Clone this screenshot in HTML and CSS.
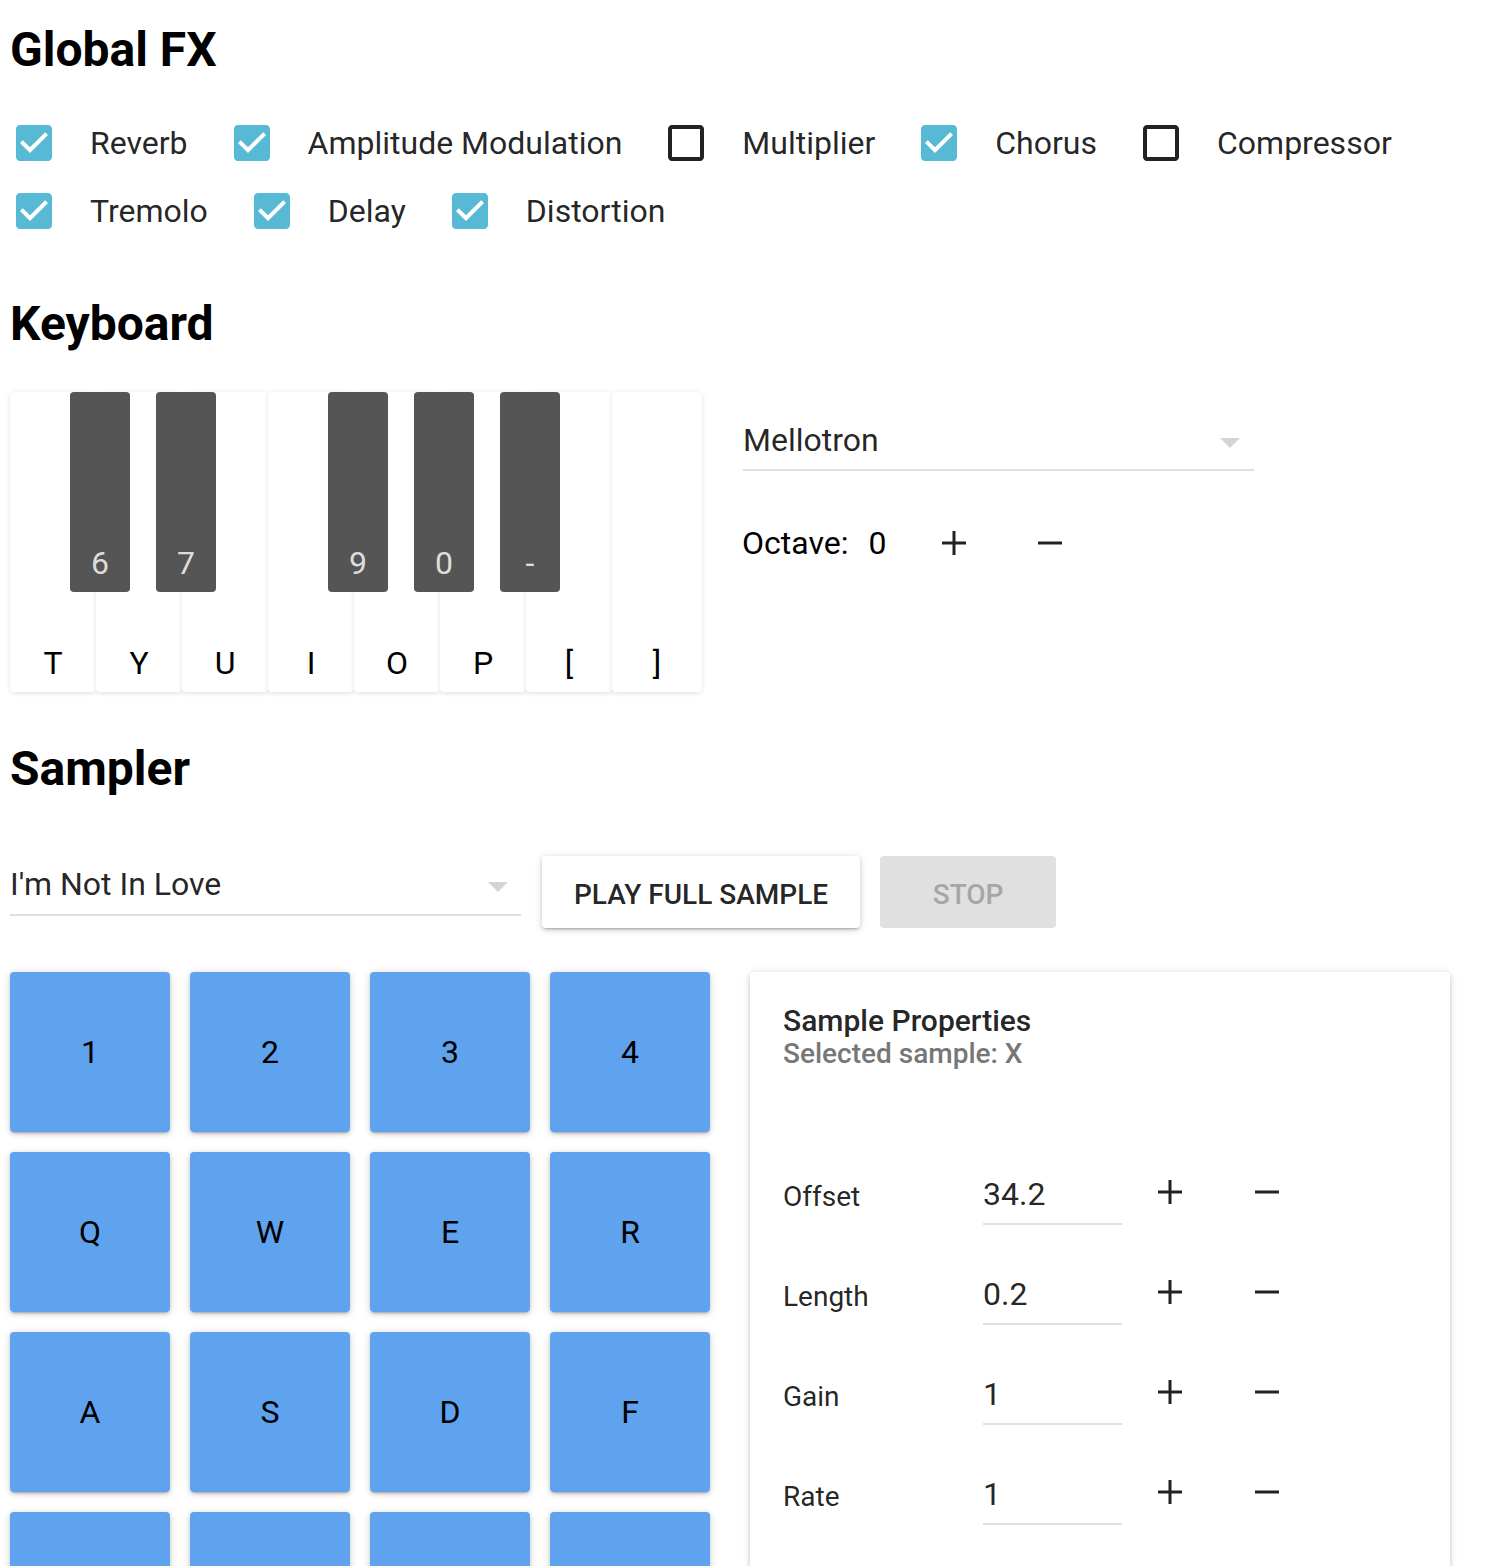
FILE: index.html
```html
<!DOCTYPE html>
<html lang="en">
<head>
    <meta charset="UTF-8">
    <meta name="viewport" content="width=device-width, initial-scale=1.0">
    <title>Synth</title>
    <link rel="stylesheet" href="styles.css">
</head>
<body>
    <div class="app">
        <h2 class="section-title fx-title">Global FX</h2>

        <div class="fx-list">
            <div class="fx-row">
                <label class="fx-item">
                    <svg class="check on" viewBox="0 0 24 24"><path d="M19 3H5c-1.11 0-2 .9-2 2v14c0 1.1.89 2 2 2h14c1.11 0 2-.9 2-2V5c0-1.1-.89-2-2-2zm-9 14l-5-5 1.41-1.41L10 14.17l7.59-7.59L19 8l-7 7z"/></svg>
                    <span>Reverb</span>
                </label>
                <label class="fx-item">
                    <svg class="check on" viewBox="0 0 24 24"><path d="M19 3H5c-1.11 0-2 .9-2 2v14c0 1.1.89 2 2 2h14c1.11 0 2-.9 2-2V5c0-1.1-.89-2-2-2zm-9 14l-5-5 1.41-1.41L10 14.17l7.59-7.59L19 8l-7 7z"/></svg>
                    <span>Amplitude Modulation</span>
                </label>
                <label class="fx-item">
                    <svg class="check" viewBox="0 0 24 24"><path d="M19 5v14H5V5h14m0-2H5c-1.1 0-2 .9-2 2v14c0 1.1.9 2 2 2h14c1.1 0 2-.9 2-2V5c0-1.1-.9-2-2-2z"/></svg>
                    <span>Multiplier</span>
                </label>
                <label class="fx-item">
                    <svg class="check on" viewBox="0 0 24 24"><path d="M19 3H5c-1.11 0-2 .9-2 2v14c0 1.1.89 2 2 2h14c1.11 0 2-.9 2-2V5c0-1.1-.89-2-2-2zm-9 14l-5-5 1.41-1.41L10 14.17l7.59-7.59L19 8l-7 7z"/></svg>
                    <span>Chorus</span>
                </label>
                <label class="fx-item">
                    <svg class="check" viewBox="0 0 24 24"><path d="M19 5v14H5V5h14m0-2H5c-1.1 0-2 .9-2 2v14c0 1.1.9 2 2 2h14c1.1 0 2-.9 2-2V5c0-1.1-.9-2-2-2z"/></svg>
                    <span>Compressor</span>
                </label>
            </div>
            <div class="fx-row">
                <label class="fx-item">
                    <svg class="check on" viewBox="0 0 24 24"><path d="M19 3H5c-1.11 0-2 .9-2 2v14c0 1.1.89 2 2 2h14c1.11 0 2-.9 2-2V5c0-1.1-.89-2-2-2zm-9 14l-5-5 1.41-1.41L10 14.17l7.59-7.59L19 8l-7 7z"/></svg>
                    <span>Tremolo</span>
                </label>
                <label class="fx-item">
                    <svg class="check on" viewBox="0 0 24 24"><path d="M19 3H5c-1.11 0-2 .9-2 2v14c0 1.1.89 2 2 2h14c1.11 0 2-.9 2-2V5c0-1.1-.89-2-2-2zm-9 14l-5-5 1.41-1.41L10 14.17l7.59-7.59L19 8l-7 7z"/></svg>
                    <span>Delay</span>
                </label>
                <label class="fx-item">
                    <svg class="check on" viewBox="0 0 24 24"><path d="M19 3H5c-1.11 0-2 .9-2 2v14c0 1.1.89 2 2 2h14c1.11 0 2-.9 2-2V5c0-1.1-.89-2-2-2zm-9 14l-5-5 1.41-1.41L10 14.17l7.59-7.59L19 8l-7 7z"/></svg>
                    <span>Distortion</span>
                </label>
            </div>
        </div>

        <h2 class="section-title keyboard-title">Keyboard</h2>

        <div class="keyboard-row">
            <div class="piano">
                <div class="white-key">T<div class="black-key">6</div></div>
                <div class="white-key">Y<div class="black-key">7</div></div>
                <div class="white-key">U</div>
                <div class="white-key">I<div class="black-key">9</div></div>
                <div class="white-key">O<div class="black-key">0</div></div>
                <div class="white-key">P<div class="black-key">-</div></div>
                <div class="white-key">[</div>
                <div class="white-key">]</div>
            </div>

            <div class="instrument">
                <div class="select instrument-select">
                    <span>Mellotron</span>
                    <span class="arrow"></span>
                </div>
                <div class="octave">
                    <span class="octave-label">Octave:</span>
                    <span class="octave-value">0</span>
                    <svg class="icon plus" viewBox="0 0 24 24"><path d="M12 0v24M0 12h24"/></svg>
                    <svg class="icon minus" viewBox="0 0 24 24"><path d="M0 12h24"/></svg>
                </div>
            </div>
        </div>

        <h2 class="section-title sampler-title">Sampler</h2>

        <div class="sampler-controls">
            <div class="select sample-select">
                <span>I'm Not In Love</span>
                <span class="arrow"></span>
            </div>
            <button class="btn">Play full sample</button>
            <button class="btn disabled">Stop</button>
        </div>

        <div class="sampler-main">
            <div class="pads">
                <div class="pad">1</div>
                <div class="pad">2</div>
                <div class="pad">3</div>
                <div class="pad">4</div>
                <div class="pad">Q</div>
                <div class="pad">W</div>
                <div class="pad">E</div>
                <div class="pad">R</div>
                <div class="pad">A</div>
                <div class="pad">S</div>
                <div class="pad">D</div>
                <div class="pad">F</div>
                <div class="pad"></div>
                <div class="pad"></div>
                <div class="pad"></div>
                <div class="pad"></div>
            </div>

            <div class="card">
                <div class="card-title">Sample Properties</div>
                <div class="card-subtitle">Selected sample: X</div>

                <div class="props">
                    <div class="prop">
                        <span class="prop-label">Offset</span>
                        <span class="prop-value">34.2</span>
                        <svg class="icon plus" viewBox="0 0 24 24"><path d="M12 0v24M0 12h24"/></svg>
                        <svg class="icon minus" viewBox="0 0 24 24"><path d="M0 12h24"/></svg>
                    </div>
                    <div class="prop">
                        <span class="prop-label">Length</span>
                        <span class="prop-value">0.2</span>
                        <svg class="icon plus" viewBox="0 0 24 24"><path d="M12 0v24M0 12h24"/></svg>
                        <svg class="icon minus" viewBox="0 0 24 24"><path d="M0 12h24"/></svg>
                    </div>
                    <div class="prop">
                        <span class="prop-label">Gain</span>
                        <span class="prop-value">1</span>
                        <svg class="icon plus" viewBox="0 0 24 24"><path d="M12 0v24M0 12h24"/></svg>
                        <svg class="icon minus" viewBox="0 0 24 24"><path d="M0 12h24"/></svg>
                    </div>
                    <div class="prop">
                        <span class="prop-label">Rate</span>
                        <span class="prop-value">1</span>
                        <svg class="icon plus" viewBox="0 0 24 24"><path d="M12 0v24M0 12h24"/></svg>
                        <svg class="icon minus" viewBox="0 0 24 24"><path d="M0 12h24"/></svg>
                    </div>
                </div>
            </div>
        </div>
    </div>
</body>
</html>
```

FILE: styles.css
```css
body {
    font-family: Roboto, 'Noto Sans', sans-serif;
    margin: 0;
    background: #fff;
    color: rgba(0, 0, 0, 0.87);
}
.app {
    padding: 0 10px;
}
.section-title {
    font-size: 48px;
    font-weight: 700;
    line-height: 56px;
    color: #000;
    margin: 0;
}
.fx-title {
    margin-top: 22px;
}
.keyboard-title {
    margin-top: 51px;
}
.sampler-title {
    margin-top: 49px;
}

/* global fx checkboxes */
.fx-list {
    margin-top: 31px;
}
.fx-row {
    display: flex;
    height: 68px;
    align-items: center;
}
.fx-item {
    display: flex;
    align-items: center;
    font-size: 32px;
    line-height: 40px;
    margin-right: 40px;
}
.check {
    width: 48px;
    height: 48px;
    margin-right: 32px;
    fill: #222;
}
.check.on {
    fill: #58b9d4;
}

/* keyboard */
.keyboard-row {
    display: flex;
    margin-top: 40px;
}
.piano {
    display: flex;
    width: 692px;
}
.white-key {
    position: relative;
    width: 86px;
    height: 300px;
    box-sizing: border-box;
    padding-bottom: 9px;
    background: #fff;
    border-radius: 4px;
    box-shadow: 0 2px 4px rgba(0, 0, 0, 0.07), 0 0 6px rgba(0, 0, 0, 0.06);
    display: flex;
    align-items: flex-end;
    justify-content: center;
    font-size: 32px;
    line-height: 40px;
    color: #000;
}
.white-key:last-child {
    flex: 1;
}
.black-key {
    position: absolute;
    top: 0;
    left: 60px;
    z-index: 1;
    width: 60px;
    height: 200px;
    box-sizing: border-box;
    padding-bottom: 9px;
    background: #555;
    border-radius: 4px;
    display: flex;
    align-items: flex-end;
    justify-content: center;
    color: #ddd;
    font-size: 32px;
    line-height: 40px;
}
.instrument {
    margin-left: 41px;
    width: 511px;
}
.select {
    display: flex;
    justify-content: space-between;
    align-items: center;
    font-size: 32px;
    line-height: 40px;
    border-bottom: 2px solid #e0e0e0;
}
.arrow {
    width: 0;
    height: 0;
    border-left: 10px solid transparent;
    border-right: 10px solid transparent;
    border-top: 10px solid #d4d4d4;
    margin-right: 14px;
}
.instrument-select {
    margin-top: 28px;
    padding-bottom: 9px;
}
.instrument-select .arrow {
    margin-top: 6px;
}
.octave {
    display: flex;
    align-items: center;
    margin-top: 52px;
    font-size: 32px;
    line-height: 40px;
    color: #000;
}
.octave-label {
    margin-left: -1px;
}
.octave-value {
    margin-left: 20px;
}
.icon {
    width: 24px;
    height: 24px;
    stroke: #222;
    stroke-width: 3;
    fill: none;
}
.octave .plus {
    margin-left: 56px;
}
.octave .minus {
    margin-left: 72px;
}

/* sampler */
.sampler-controls {
    display: flex;
    align-items: flex-start;
    margin-top: 59px;
}
.sample-select {
    width: 511px;
    padding-top: 8px;
    padding-bottom: 10px;
}
.sample-select .arrow {
    margin-right: 13px;
    margin-top: 6px;
}
.btn {
    height: 72px;
    margin-left: 21px;
    padding: 4px 32px 0;
    border: none;
    border-radius: 4px;
    background: #fff;
    font-family: Roboto, sans-serif;
    font-size: 28px;
    font-weight: 500;
    text-transform: uppercase;
    color: rgba(0, 0, 0, 0.87);
    box-shadow: 0 3px 2px -2px rgba(0, 0, 0, 0.2), 0 2px 4px rgba(0, 0, 0, 0.14), 0 1px 10px rgba(0, 0, 0, 0.12);
    cursor: pointer;
}
.btn.disabled {
    width: 176px;
    margin-left: 20px;
    background: #e0e0e0;
    color: #a6a6a6;
    box-shadow: none;
}
.sampler-main {
    display: flex;
    align-items: flex-start;
    margin-top: 44px;
}
.pads {
    display: grid;
    grid-template-columns: repeat(4, 160px);
    grid-auto-rows: 160px;
    gap: 20px;
}
.pad {
    background: #5fa2ee;
    border-radius: 4px;
    box-shadow: 0 3px 2px -2px rgba(0, 0, 0, 0.2), 0 2px 4px rgba(0, 0, 0, 0.14), 0 1px 10px rgba(0, 0, 0, 0.12);
    display: flex;
    align-items: center;
    justify-content: center;
    font-size: 32px;
    color: #000;
}
.card {
    margin-left: 40px;
    width: 700px;
    height: 700px;
    box-sizing: border-box;
    padding: 33px 33px;
    background: #fff;
    border-radius: 4px;
    box-shadow: 0 3px 2px -2px rgba(0, 0, 0, 0.2), 0 2px 4px rgba(0, 0, 0, 0.14), 0 1px 10px rgba(0, 0, 0, 0.12);
}
.card-title {
    font-size: 30px;
    font-weight: 500;
    line-height: 32px;
}
.card-subtitle {
    font-size: 28px;
    font-weight: 500;
    line-height: 34px;
    color: #777;
}
.props {
    margin-top: 103px;
}
.prop {
    display: flex;
    align-items: flex-start;
    margin-bottom: 49px;
}
.prop-label {
    width: 200px;
    padding-top: 3px;
    font-size: 28px;
    line-height: 40px;
}
.prop-value {
    width: 139px;
    padding-bottom: 9px;
    border-bottom: 2px solid #e0e0e0;
    font-size: 32px;
    line-height: 40px;
}
.prop .plus {
    margin: 6px 0 0 36px;
}
.prop .minus {
    margin: 6px 0 0 73px;
}
```
